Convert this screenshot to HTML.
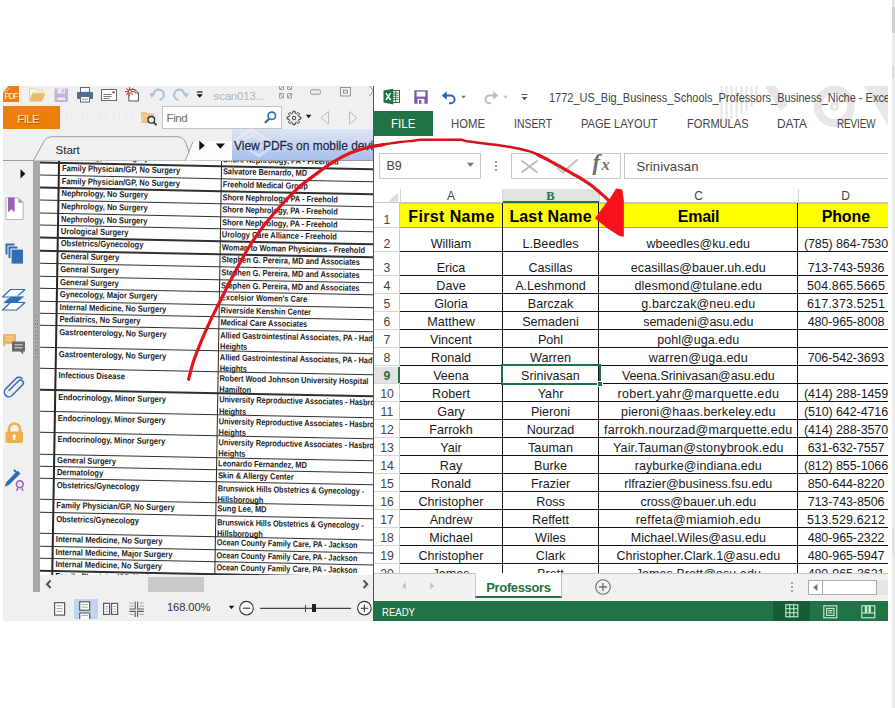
<!DOCTYPE html>
<html lang="en"><head><meta charset="utf-8"><title>PDF to Excel data entry</title>
<style>
html,body{margin:0;padding:0;background:#fff;}
body{width:895px;height:708px;overflow:hidden;position:relative;font-family:"Liberation Sans",sans-serif;}
#stage{position:absolute;left:0;top:0;width:895px;height:708px;overflow:hidden;background:#fff;}
#stage div,#stage span.t,#stage svg{position:absolute;box-sizing:border-box;}
span.t{white-space:pre;display:block;}
</style></head><body><div id="stage">
<div style="left:3px;top:86px;width:370px;height:535px;background:#f0f0f0;"></div>
<div id="doc" style="left:40px;top:160px;width:333px;height:415px;background:#fff;overflow:hidden;">
<div id="scan" style="left:0;top:0;width:345px;height:430px;transform:matrix(1,0.02,-0.0164,1,0,0);transform-origin:20px 4px;">
<div style="left:18.1px;top:-10px;width:1.5px;height:460px;background:#262626;"></div>
<div style="left:180.8px;top:-10px;width:1.5px;height:460px;background:#262626;"></div>
<div style="left:-5px;top:2.2500000000000058px;width:380px;height:1.3px;background:#303030;"></div>
<span class="t" style="left:22.00px;top:-8.26px;font-size:8.7px;line-height:8.7px;color:#1c1c1c;transform:scaleX(0.8700);transform-origin:0 0;font-weight:bold;">Nephrology, No Surgery</span>
<span class="t" style="left:182.80px;top:-8.16px;font-size:8.7px;line-height:8.7px;color:#1c1c1c;transform:scaleX(0.8550);transform-origin:0 0;font-weight:bold;">Shore Nephrology, PA - Freehold</span>
<div style="left:-5px;top:14.750000000000005px;width:380px;height:1.3px;background:#303030;"></div>
<span class="t" style="left:22.00px;top:4.24px;font-size:8.7px;line-height:8.7px;color:#1c1c1c;transform:scaleX(0.8700);transform-origin:0 0;font-weight:bold;">Family Physician/GP, No Surgery</span>
<span class="t" style="left:182.80px;top:4.34px;font-size:8.7px;line-height:8.7px;color:#1c1c1c;transform:scaleX(0.8550);transform-origin:0 0;font-weight:bold;">Salvatore Bernardo, MD</span>
<div style="left:-5px;top:27.449999999999996px;width:380px;height:1.3px;background:#303030;"></div>
<span class="t" style="left:22.00px;top:16.74px;font-size:8.7px;line-height:8.7px;color:#1c1c1c;transform:scaleX(0.8700);transform-origin:0 0;font-weight:bold;">Family Physician/GP, No Surgery</span>
<span class="t" style="left:182.80px;top:16.84px;font-size:8.7px;line-height:8.7px;color:#1c1c1c;transform:scaleX(0.8550);transform-origin:0 0;font-weight:bold;">Freehold Medical Group</span>
<div style="left:-5px;top:39.949999999999996px;width:380px;height:1.3px;background:#303030;"></div>
<span class="t" style="left:22.00px;top:29.44px;font-size:8.7px;line-height:8.7px;color:#1c1c1c;transform:scaleX(0.8700);transform-origin:0 0;font-weight:bold;">Nephrology, No Surgery</span>
<span class="t" style="left:182.80px;top:29.54px;font-size:8.7px;line-height:8.7px;color:#1c1c1c;transform:scaleX(0.8550);transform-origin:0 0;font-weight:bold;">Shore Nephrology, PA - Freehold</span>
<div style="left:-5px;top:52.54999999999999px;width:380px;height:1.3px;background:#303030;"></div>
<span class="t" style="left:22.00px;top:41.94px;font-size:8.7px;line-height:8.7px;color:#1c1c1c;transform:scaleX(0.8700);transform-origin:0 0;font-weight:bold;">Nephrology, No Surgery</span>
<span class="t" style="left:182.80px;top:42.04px;font-size:8.7px;line-height:8.7px;color:#1c1c1c;transform:scaleX(0.8550);transform-origin:0 0;font-weight:bold;">Shore Nephrology, PA - Freehold</span>
<div style="left:-5px;top:65.04999999999998px;width:380px;height:1.3px;background:#303030;"></div>
<span class="t" style="left:22.00px;top:54.54px;font-size:8.7px;line-height:8.7px;color:#1c1c1c;transform:scaleX(0.8700);transform-origin:0 0;font-weight:bold;">Nephrology, No Surgery</span>
<span class="t" style="left:182.80px;top:54.64px;font-size:8.7px;line-height:8.7px;color:#1c1c1c;transform:scaleX(0.8550);transform-origin:0 0;font-weight:bold;">Shore Nephrology, PA - Freehold</span>
<div style="left:-5px;top:77.44999999999999px;width:380px;height:1.3px;background:#303030;"></div>
<span class="t" style="left:22.00px;top:67.04px;font-size:8.7px;line-height:8.7px;color:#1c1c1c;transform:scaleX(0.8700);transform-origin:0 0;font-weight:bold;">Urological Surgery</span>
<span class="t" style="left:182.80px;top:67.14px;font-size:8.7px;line-height:8.7px;color:#1c1c1c;transform:scaleX(0.8550);transform-origin:0 0;font-weight:bold;">Urology Care Alliance - Freehold</span>
<div style="left:-5px;top:90.25px;width:380px;height:1.3px;background:#303030;"></div>
<span class="t" style="left:22.00px;top:79.44px;font-size:8.7px;line-height:8.7px;color:#1c1c1c;transform:scaleX(0.8700);transform-origin:0 0;font-weight:bold;">Obstetrics/Gynecology</span>
<span class="t" style="left:182.80px;top:79.54px;font-size:8.7px;line-height:8.7px;color:#1c1c1c;transform:scaleX(0.8550);transform-origin:0 0;font-weight:bold;">Woman to Woman Physicians - Freehold</span>
<div style="left:-5px;top:102.85px;width:380px;height:1.3px;background:#303030;"></div>
<span class="t" style="left:22.00px;top:92.24px;font-size:8.7px;line-height:8.7px;color:#1c1c1c;transform:scaleX(0.8700);transform-origin:0 0;font-weight:bold;">General Surgery</span>
<span class="t" style="left:182.80px;top:92.34px;font-size:8.7px;line-height:8.7px;color:#1c1c1c;transform:scaleX(0.8550);transform-origin:0 0;font-weight:bold;">Stephen G. Pereira, MD and Associates</span>
<div style="left:-5px;top:115.54999999999998px;width:380px;height:1.3px;background:#303030;"></div>
<span class="t" style="left:22.00px;top:104.84px;font-size:8.7px;line-height:8.7px;color:#1c1c1c;transform:scaleX(0.8700);transform-origin:0 0;font-weight:bold;">General Surgery</span>
<span class="t" style="left:182.80px;top:104.94px;font-size:8.7px;line-height:8.7px;color:#1c1c1c;transform:scaleX(0.8550);transform-origin:0 0;font-weight:bold;">Stephen G. Pereira, MD and Associates</span>
<div style="left:-5px;top:128.04999999999998px;width:380px;height:1.3px;background:#303030;"></div>
<span class="t" style="left:22.00px;top:117.54px;font-size:8.7px;line-height:8.7px;color:#1c1c1c;transform:scaleX(0.8700);transform-origin:0 0;font-weight:bold;">General Surgery</span>
<span class="t" style="left:182.80px;top:117.64px;font-size:8.7px;line-height:8.7px;color:#1c1c1c;transform:scaleX(0.8550);transform-origin:0 0;font-weight:bold;">Stephen G. Pereira, MD and Associates</span>
<div style="left:-5px;top:140.54999999999998px;width:380px;height:1.3px;background:#303030;"></div>
<span class="t" style="left:22.00px;top:130.04px;font-size:8.7px;line-height:8.7px;color:#1c1c1c;transform:scaleX(0.8700);transform-origin:0 0;font-weight:bold;">Gynecology, Major Surgery</span>
<span class="t" style="left:182.80px;top:130.14px;font-size:8.7px;line-height:8.7px;color:#1c1c1c;transform:scaleX(0.8550);transform-origin:0 0;font-weight:bold;">Excelsior Women&#x27;s Care</span>
<div style="left:-5px;top:152.74999999999997px;width:380px;height:1.3px;background:#303030;"></div>
<span class="t" style="left:22.00px;top:142.54px;font-size:8.7px;line-height:8.7px;color:#1c1c1c;transform:scaleX(0.8700);transform-origin:0 0;font-weight:bold;">Internal Medicine, No Surgery</span>
<span class="t" style="left:182.80px;top:142.64px;font-size:8.7px;line-height:8.7px;color:#1c1c1c;transform:scaleX(0.8550);transform-origin:0 0;font-weight:bold;">Riverside Kenshin Center</span>
<div style="left:-5px;top:165.15px;width:380px;height:1.3px;background:#303030;"></div>
<span class="t" style="left:22.00px;top:154.74px;font-size:8.7px;line-height:8.7px;color:#1c1c1c;transform:scaleX(0.8700);transform-origin:0 0;font-weight:bold;">Pediatrics, No Surgery</span>
<span class="t" style="left:182.80px;top:154.84px;font-size:8.7px;line-height:8.7px;color:#1c1c1c;transform:scaleX(0.8550);transform-origin:0 0;font-weight:bold;">Medical Care Associates</span>
<div style="left:-5px;top:186.95000000000002px;width:380px;height:1.3px;background:#303030;"></div>
<span class="t" style="left:22.00px;top:168.24px;font-size:8.7px;line-height:8.7px;color:#1c1c1c;transform:scaleX(0.8700);transform-origin:0 0;font-weight:bold;">Gastroenterology, No Surgery</span>
<span class="t" style="left:182.80px;top:168.14px;font-size:8.7px;line-height:8.7px;color:#1c1c1c;transform:scaleX(0.8464);transform-origin:0 0;font-weight:bold;">Allied Gastrointestinal Associates, PA - Had</span>
<span class="t" style="left:182.80px;top:179.34px;font-size:8.7px;line-height:8.7px;color:#1c1c1c;transform:scaleX(0.8550);transform-origin:0 0;font-weight:bold;">Heights</span>
<div style="left:-5px;top:208.04999999999998px;width:380px;height:1.3px;background:#303030;"></div>
<span class="t" style="left:22.00px;top:190.04px;font-size:8.7px;line-height:8.7px;color:#1c1c1c;transform:scaleX(0.8700);transform-origin:0 0;font-weight:bold;">Gastroenterology, No Surgery</span>
<span class="t" style="left:182.80px;top:189.94px;font-size:8.7px;line-height:8.7px;color:#1c1c1c;transform:scaleX(0.8464);transform-origin:0 0;font-weight:bold;">Allied Gastrointestinal Associates, PA - Had</span>
<span class="t" style="left:182.80px;top:201.14px;font-size:8.7px;line-height:8.7px;color:#1c1c1c;transform:scaleX(0.8550);transform-origin:0 0;font-weight:bold;">Heights</span>
<div style="left:-5px;top:229.45000000000002px;width:380px;height:1.3px;background:#303030;"></div>
<span class="t" style="left:22.00px;top:211.14px;font-size:8.7px;line-height:8.7px;color:#1c1c1c;transform:scaleX(0.8700);transform-origin:0 0;font-weight:bold;">Infectious Disease</span>
<span class="t" style="left:182.80px;top:211.04px;font-size:8.7px;line-height:8.7px;color:#1c1c1c;transform:scaleX(0.8550);transform-origin:0 0;font-weight:bold;">Robert Wood Johnson University Hospital</span>
<span class="t" style="left:182.80px;top:222.24px;font-size:8.7px;line-height:8.7px;color:#1c1c1c;transform:scaleX(0.8550);transform-origin:0 0;font-weight:bold;">Hamilton</span>
<div style="left:-5px;top:250.65px;width:380px;height:1.3px;background:#303030;"></div>
<span class="t" style="left:22.00px;top:232.54px;font-size:8.7px;line-height:8.7px;color:#1c1c1c;transform:scaleX(0.8700);transform-origin:0 0;font-weight:bold;">Endocrinology, Minor Surgery</span>
<span class="t" style="left:182.80px;top:232.44px;font-size:8.7px;line-height:8.7px;color:#1c1c1c;transform:scaleX(0.8379);transform-origin:0 0;font-weight:bold;">University Reproductive Associates - Hasbro</span>
<span class="t" style="left:182.80px;top:243.64px;font-size:8.7px;line-height:8.7px;color:#1c1c1c;transform:scaleX(0.8550);transform-origin:0 0;font-weight:bold;">Heights</span>
<div style="left:-5px;top:272.05px;width:380px;height:1.3px;background:#303030;"></div>
<span class="t" style="left:22.00px;top:253.74px;font-size:8.7px;line-height:8.7px;color:#1c1c1c;transform:scaleX(0.8700);transform-origin:0 0;font-weight:bold;">Endocrinology, Minor Surgery</span>
<span class="t" style="left:182.80px;top:253.64px;font-size:8.7px;line-height:8.7px;color:#1c1c1c;transform:scaleX(0.8379);transform-origin:0 0;font-weight:bold;">University Reproductive Associates - Hasbro</span>
<span class="t" style="left:182.80px;top:264.84px;font-size:8.7px;line-height:8.7px;color:#1c1c1c;transform:scaleX(0.8550);transform-origin:0 0;font-weight:bold;">Heights</span>
<div style="left:-5px;top:293.55px;width:380px;height:1.3px;background:#303030;"></div>
<span class="t" style="left:22.00px;top:275.14px;font-size:8.7px;line-height:8.7px;color:#1c1c1c;transform:scaleX(0.8700);transform-origin:0 0;font-weight:bold;">Endocrinology, Minor Surgery</span>
<span class="t" style="left:182.80px;top:275.04px;font-size:8.7px;line-height:8.7px;color:#1c1c1c;transform:scaleX(0.8379);transform-origin:0 0;font-weight:bold;">University Reproductive Associates - Hasbro</span>
<span class="t" style="left:182.80px;top:286.24px;font-size:8.7px;line-height:8.7px;color:#1c1c1c;transform:scaleX(0.8550);transform-origin:0 0;font-weight:bold;">Heights</span>
<div style="left:-5px;top:305.85px;width:380px;height:1.3px;background:#303030;"></div>
<span class="t" style="left:22.00px;top:295.54px;font-size:8.7px;line-height:8.7px;color:#1c1c1c;transform:scaleX(0.8700);transform-origin:0 0;font-weight:bold;">General Surgery</span>
<span class="t" style="left:182.80px;top:295.64px;font-size:8.7px;line-height:8.7px;color:#1c1c1c;transform:scaleX(0.8550);transform-origin:0 0;font-weight:bold;">Leonardo Fernandez, MD</span>
<div style="left:-5px;top:318.05px;width:380px;height:1.3px;background:#303030;"></div>
<span class="t" style="left:22.00px;top:307.84px;font-size:8.7px;line-height:8.7px;color:#1c1c1c;transform:scaleX(0.8700);transform-origin:0 0;font-weight:bold;">Dermatology</span>
<span class="t" style="left:182.80px;top:307.94px;font-size:8.7px;line-height:8.7px;color:#1c1c1c;transform:scaleX(0.8550);transform-origin:0 0;font-weight:bold;">Skin &amp; Allergy Center</span>
<div style="left:-5px;top:339.15000000000003px;width:380px;height:1.3px;background:#303030;"></div>
<span class="t" style="left:22.00px;top:321.14px;font-size:8.7px;line-height:8.7px;color:#1c1c1c;transform:scaleX(0.8700);transform-origin:0 0;font-weight:bold;">Obstetrics/Gynecology</span>
<span class="t" style="left:182.80px;top:321.04px;font-size:8.7px;line-height:8.7px;color:#1c1c1c;transform:scaleX(0.8311);transform-origin:0 0;font-weight:bold;">Brunswick Hills Obstetrics &amp; Gynecology -</span>
<span class="t" style="left:182.80px;top:332.24px;font-size:8.7px;line-height:8.7px;color:#1c1c1c;transform:scaleX(0.8550);transform-origin:0 0;font-weight:bold;">Hillsborough</span>
<div style="left:-5px;top:351.85px;width:380px;height:1.3px;background:#303030;"></div>
<span class="t" style="left:22.00px;top:341.14px;font-size:8.7px;line-height:8.7px;color:#1c1c1c;transform:scaleX(0.8700);transform-origin:0 0;font-weight:bold;">Family Physician/GP, No Surgery</span>
<span class="t" style="left:182.80px;top:341.24px;font-size:8.7px;line-height:8.7px;color:#1c1c1c;transform:scaleX(0.8550);transform-origin:0 0;font-weight:bold;">Sung Lee, MD</span>
<div style="left:-5px;top:373.05000000000007px;width:380px;height:1.3px;background:#303030;"></div>
<span class="t" style="left:22.00px;top:354.94px;font-size:8.7px;line-height:8.7px;color:#1c1c1c;transform:scaleX(0.8700);transform-origin:0 0;font-weight:bold;">Obstetrics/Gynecology</span>
<span class="t" style="left:182.80px;top:354.84px;font-size:8.7px;line-height:8.7px;color:#1c1c1c;transform:scaleX(0.8311);transform-origin:0 0;font-weight:bold;">Brunswick Hills Obstetrics &amp; Gynecology -</span>
<span class="t" style="left:182.80px;top:366.04px;font-size:8.7px;line-height:8.7px;color:#1c1c1c;transform:scaleX(0.8550);transform-origin:0 0;font-weight:bold;">Hillsborough</span>
<div style="left:-5px;top:385.55000000000007px;width:380px;height:1.3px;background:#303030;"></div>
<span class="t" style="left:22.00px;top:375.04px;font-size:8.7px;line-height:8.7px;color:#1c1c1c;transform:scaleX(0.8700);transform-origin:0 0;font-weight:bold;">Internal Medicine, No Surgery</span>
<span class="t" style="left:182.80px;top:375.14px;font-size:8.7px;line-height:8.7px;color:#1c1c1c;transform:scaleX(0.8328);transform-origin:0 0;font-weight:bold;">Ocean County Family Care, PA - Jackson</span>
<div style="left:-5px;top:397.95000000000005px;width:380px;height:1.3px;background:#303030;"></div>
<span class="t" style="left:22.00px;top:387.54px;font-size:8.7px;line-height:8.7px;color:#1c1c1c;transform:scaleX(0.8700);transform-origin:0 0;font-weight:bold;">Internal Medicine, Major Surgery</span>
<span class="t" style="left:182.80px;top:387.64px;font-size:8.7px;line-height:8.7px;color:#1c1c1c;transform:scaleX(0.8328);transform-origin:0 0;font-weight:bold;">Ocean County Family Care, PA - Jackson</span>
<div style="left:-5px;top:410.35px;width:380px;height:1.3px;background:#303030;"></div>
<span class="t" style="left:22.00px;top:399.94px;font-size:8.7px;line-height:8.7px;color:#1c1c1c;transform:scaleX(0.8700);transform-origin:0 0;font-weight:bold;">Internal Medicine, No Surgery</span>
<span class="t" style="left:182.80px;top:400.04px;font-size:8.7px;line-height:8.7px;color:#1c1c1c;transform:scaleX(0.8328);transform-origin:0 0;font-weight:bold;">Ocean County Family Care, PA - Jackson</span>
<div style="left:-5px;top:422.75px;width:380px;height:1.3px;background:#303030;"></div>
<span class="t" style="left:22.00px;top:412.34px;font-size:8.7px;line-height:8.7px;color:#1c1c1c;transform:scaleX(0.8700);transform-origin:0 0;font-weight:bold;">Family Physician/GP, No Surgery</span>
<span class="t" style="left:182.80px;top:412.44px;font-size:8.7px;line-height:8.7px;color:#1c1c1c;transform:scaleX(0.8328);transform-origin:0 0;font-weight:bold;">Ocean County Family Care, PA - Jackson</span>
</div></div>
<div style="left:33px;top:160px;width:7px;height:432px;background:#a9a9a9;"></div>
<div style="left:34.5px;top:316.0px;width:1.3px;height:1.3px;background:#878787;"></div>
<div style="left:37px;top:316.0px;width:1.3px;height:1.3px;background:#878787;"></div>
<div style="left:34.5px;top:319.7px;width:1.3px;height:1.3px;background:#878787;"></div>
<div style="left:37px;top:319.7px;width:1.3px;height:1.3px;background:#878787;"></div>
<div style="left:34.5px;top:323.4px;width:1.3px;height:1.3px;background:#878787;"></div>
<div style="left:37px;top:323.4px;width:1.3px;height:1.3px;background:#878787;"></div>
<div style="left:34.5px;top:327.1px;width:1.3px;height:1.3px;background:#878787;"></div>
<div style="left:37px;top:327.1px;width:1.3px;height:1.3px;background:#878787;"></div>
<div style="left:34.5px;top:330.8px;width:1.3px;height:1.3px;background:#878787;"></div>
<div style="left:37px;top:330.8px;width:1.3px;height:1.3px;background:#878787;"></div>
<div style="left:34.5px;top:334.5px;width:1.3px;height:1.3px;background:#878787;"></div>
<div style="left:37px;top:334.5px;width:1.3px;height:1.3px;background:#878787;"></div>
<div style="left:34.5px;top:338.2px;width:1.3px;height:1.3px;background:#878787;"></div>
<div style="left:37px;top:338.2px;width:1.3px;height:1.3px;background:#878787;"></div>
<div style="left:34.5px;top:341.9px;width:1.3px;height:1.3px;background:#878787;"></div>
<div style="left:37px;top:341.9px;width:1.3px;height:1.3px;background:#878787;"></div>
<div style="left:34.5px;top:345.6px;width:1.3px;height:1.3px;background:#878787;"></div>
<div style="left:37px;top:345.6px;width:1.3px;height:1.3px;background:#878787;"></div>
<div style="left:34.5px;top:349.3px;width:1.3px;height:1.3px;background:#878787;"></div>
<div style="left:37px;top:349.3px;width:1.3px;height:1.3px;background:#878787;"></div>
<div style="left:34.5px;top:353.0px;width:1.3px;height:1.3px;background:#878787;"></div>
<div style="left:37px;top:353.0px;width:1.3px;height:1.3px;background:#878787;"></div>
<div style="left:34.5px;top:356.7px;width:1.3px;height:1.3px;background:#878787;"></div>
<div style="left:37px;top:356.7px;width:1.3px;height:1.3px;background:#878787;"></div>
<div style="left:3px;top:160px;width:370px;height:1px;background:#9a9a9a;"></div>
<div style="left:40px;top:575px;width:333px;height:16.5px;background:#f0f0f0;"></div>
<div style="left:147.5px;top:577px;width:56px;height:14.5px;background:#c9c9c9;"></div>
<svg style="left:44px;top:578px" width="10" height="12" viewBox="0 0 10 12"><path d="M6.600 2.400L3 6.200L6.600 10" fill="none" stroke="#505050" stroke-width="2"/></svg>
<svg style="left:361px;top:578px" width="10" height="12" viewBox="0 0 10 12"><path d="M2.600 2.400L6.200 6.200L2.600 10" fill="none" stroke="#505050" stroke-width="2"/></svg>
<div style="left:74px;top:599px;width:24px;height:20px;background:#c4d4ef;"></div>
<svg style="left:50px;top:598px" width="100" height="22" viewBox="0 0 100 22" fill="none" stroke="#5a5a5a" stroke-width="1.200">
<rect x="4.600" y="4.700" width="10" height="12.400" fill="#fff"/><path d="M6.500 7.800h6.200M6.500 10.600h6.200M6.500 13.400h6.200" stroke="#9a9a9a" stroke-width="0.900"/>
<rect x="29.700" y="3.800" width="10" height="8.400" fill="#fff"/><path d="M29.700 21v-6h10v6" fill="#fff"/><path d="M31.500 6.600h6.400M31.500 9.200h6.400M31.500 17.400h6.400" stroke="#9a9a9a" stroke-width="0.900"/>
<rect x="53.600" y="5.400" width="6" height="11" fill="#fff"/><rect x="61.600" y="5.400" width="6" height="11" fill="#fff"/><path d="M55.300 8.500h2.800M55.300 11h2.800M55.300 13.500h2.800M63.300 8.500h2.800M63.300 11h2.800M63.300 13.500h2.800" stroke="#9a9a9a" stroke-width="0.900"/>
<path d="M85.200 3.400v7.600h-5.800M87.600 3.400v7.600h6.200M85.200 19v-5.600h-5.800M87.600 19v-5.600h6.200" stroke="#5a5a5a" stroke-width="1.100"/><path d="M79.500 5h4M79.500 8h4M89.500 5h4.400M89.500 8h4.400M79.500 16.400h4M89.500 16.400h4.400" stroke="#9a9a9a" stroke-width="0.900"/>
</svg>
<span class="t" style="left:167.00px;top:602.42px;font-size:11.2px;line-height:11.2px;color:#333;letter-spacing:-0.102px;">168.00%</span>
<svg style="left:228px;top:605px" width="8" height="6" viewBox="0 0 8 6"><path d="M0.8 0.8h5.4L3.500 4.200z" fill="#111"/></svg>
<svg style="left:236px;top:598px" width="140" height="22" viewBox="0 0 140 22" fill="none" stroke="#333" stroke-width="1.100">
<circle cx="10.5" cy="10.2" r="6.8" fill="#fff"/><path d="M6.800 10.200h7.400"/>
<path d="M24 10.400h91" stroke="#444"/><path d="M69.500 7v7" stroke="#444"/><rect x="76" y="6" width="4" height="8" fill="#222" stroke="none"/>
<circle cx="128.400" cy="10.200" r="6.800" fill="#fff"/><path d="M124.600 10.200h7.600M128.400 6.400v7.600"/>
</svg>
<svg style="left:19px;top:168.300px" width="8" height="12" viewBox="0 0 8 12"><path d="M1.500 1.200v9.200L6.400 5.800z" fill="#111"/></svg>
<svg style="left:4px;top:196px" width="24" height="28" viewBox="0 0 24 28"><path d="M2 2h12.500l4.700 4.700v16.800h-17.200z" fill="#fff" stroke="#b5b5b5"/><path d="M14.500 2l4.700 4.700h-4.700z" fill="#9a9a9a"/><path d="M4 1.600v14.600l3.300-2.900 3.300 2.900V1.600z" fill="#9b5fb5"/></svg>
<svg style="left:3px;top:241px" width="24" height="26" viewBox="0 0 24 26"><path d="M2.500 2.500h9v2h-7v9h-2z" fill="#2f6db5"/><path d="M5.500 5.500h9v2h-7v9.500h-2z" fill="#2f6db5"/><rect x="8.600" y="8.600" width="11.400" height="14" fill="#2f6db5"/></svg>
<svg style="left:1px;top:287px" width="27" height="26" viewBox="0 0 27 26" fill="none" stroke-linejoin="round"><path d="M9.500 2.500h14.500l-8.500 7.500h-14z" stroke="#2f6db5" stroke-width="1.200" fill="#fff"/><path d="M9.500 9h14.500l-8.500 7.500h-14z" fill="#2f6db5" stroke="#f0f0f0" stroke-width="0.800"/><path d="M9.500 15.500h14.500l-8.500 7.500h-14z" stroke="#2f6db5" stroke-width="1.200" fill="#fff"/></svg>
<svg style="left:2px;top:331px" width="26" height="26" viewBox="0 0 26 26"><path d="M1 3h13v10h-9.500l-3.500 3z" fill="#f0b45c"/><path d="M3.500 6h8M3.500 9h8" stroke="#fbe3bd"/><path d="M10 10.500h13v10h-1.800v3l-3-3h-8.200z" fill="#6a6a6a"/><path d="M12.500 13.800h8M12.500 16.800h8" stroke="#ddd"/></svg>
<svg style="left:2px;top:375px" width="26" height="26" viewBox="0 0 26 26" fill="none" stroke="#2f6db5" stroke-width="1.500" stroke-linecap="round"><path d="M7 15.500l9.500-9.500a2.700 2.700 0 0 1 4 4l-10.500 10.500a4.600 4.600 0 0 1-6.500-6.500l10.500-10.500a4.200 4.200 0 0 1 6 0"/></svg>
<svg style="left:4px;top:421px" width="22" height="24" viewBox="0 0 22 24"><path d="M5 11V8a5.500 5.500 0 0 1 11 0v3" fill="none" stroke="#eeb04e" stroke-width="2.600"/><rect x="1.500" y="10.500" width="17.500" height="11.500" rx="1.500" fill="#eeb04e"/><path d="M10.200 13.500a1.600 1.600 0 0 1 .9 3v2.500h-1.800v-2.500a1.600 1.600 0 0 1 .9-3z" fill="#fff"/></svg>
<svg style="left:3px;top:467px" width="24" height="26" viewBox="0 0 24 26"><path d="M14.500 3.500l3 3-11.500 11.500-4.500 1.800 1.800-4.600z" fill="#2f6db5"/><path d="M11 3l2 2" stroke="#2f6db5" stroke-width="2"/><circle cx="16.800" cy="17.200" r="3.400" fill="#f2e7f7" stroke="#9b5fb5" stroke-width="1.600"/><path d="M14.300 20l-1.500 4.200 2.600-1.400zM19.300 20l1.500 4.200-2.600-1.400z" fill="#9b5fb5"/></svg>
<svg style="left:3px;top:86px" width="17" height="17" viewBox="0 0 17 17"><rect x="0" y="0" width="16" height="16" fill="#ee7d12"/><path d="M0 6.500L5.500 0H0z" fill="#f0f0f0"/><path d="M0.500 7l2-2.200 1 .6 3-3.600" stroke="#fbd7a6" stroke-width="0.900" fill="none"/></svg>
<span class="t" style="left:4.50px;top:92.96px;font-size:8.2px;line-height:8.2px;color:#fff2dc;letter-spacing:-1.133px;">PDF</span>
<svg style="left:28px;top:87px" width="20" height="16" viewBox="0 0 20 16"><path d="M1.500 1.500h5l1.500 1.500h6.500v3h-10l-3 8z" fill="#fdf6e3" stroke="#e3c48c" stroke-width="0.800"/><path d="M4.800 6.500h12.700l-3.600 8h-12.200z" fill="#eab866"/></svg>
<svg style="left:54px;top:88px" width="15" height="15" viewBox="0 0 15 15"><rect x="0.500" y="0.500" width="13.500" height="13.500" fill="#c5b1d9"/><rect x="3.500" y="0.500" width="7.500" height="5" fill="#efe8f5"/><rect x="7.800" y="1.300" width="1.800" height="3" fill="#c5b1d9"/><rect x="3.500" y="9.500" width="7.500" height="2.500" fill="#efe8f5"/></svg>
<svg style="left:76px;top:86px" width="18" height="18" viewBox="0 0 18 18"><rect x="4.500" y="1.500" width="9" height="6" fill="#fff" stroke="#5c6b7d"/><rect x="1" y="6" width="16" height="7" rx="1" fill="#5c6b7d"/><rect x="5" y="5.800" width="8" height="2" fill="#3f74b5"/><rect x="4.500" y="10.500" width="9" height="5.500" fill="#fff" stroke="#5c6b7d"/><path d="M6 13.200h6" stroke="#8a96a5"/></svg>
<svg style="left:100px;top:88px" width="18" height="14" viewBox="0 0 18 14"><rect x="1.500" y="1.500" width="15" height="11" fill="#fff" stroke="#666"/><path d="M3.500 6.500h8M3.500 8.500h8M3.500 10.500h6" stroke="#666" stroke-width="0.900"/><rect x="12.500" y="3.300" width="2" height="2" fill="#444"/></svg>
<svg style="left:124px;top:86px" width="18" height="18" viewBox="0 0 18 18"><path d="M4.800 3.500h6.200l3.500 3.500v8h-9.700z" fill="#fff" stroke="#555" stroke-width="1"/><path d="M11 3.500v3.500h3.500" fill="none" stroke="#555" stroke-width="0.900"/><path d="M6.80 5.60L10.20 5.60M6.45 6.45L8.85 8.85M5.60 6.80L5.60 10.20M4.75 6.45L2.35 8.85M4.40 5.60L1.00 5.60M4.75 4.75L2.35 2.35M5.60 4.40L5.60 1.00M6.45 4.75L8.85 2.35" stroke="#dc4a35" stroke-width="1.100"/></svg>
<svg style="left:148px;top:86px" width="18" height="18" viewBox="0 0 18 18" fill="none"><path d="M5.52 8.35A5.2 5.2 0 1 1 11.60 13.92" stroke="#a9c0dd" stroke-width="2.100"/><path d="M1.300 7.200l6.200 0.300-3.800 4.300z" fill="#a9c0dd"/></svg>
<svg style="left:172px;top:86px" width="18" height="18" viewBox="0 0 18 18" fill="none"><path d="M12.48 8.35A5.2 5.2 0 1 0 6.40 13.92" stroke="#a9c0dd" stroke-width="2.100"/><path d="M17 7.200l-6.200 0.300 3.800 4.300z" fill="#a9c0dd"/></svg>
<svg style="left:195px;top:90px" width="9" height="9" viewBox="0 0 9 9"><path d="M1.800 2h5.800" stroke="#111" stroke-width="1.200"/><path d="M1.600 4.200h6.200L4.700 7.800z" fill="#111"/></svg>
<span class="t" style="left:213.60px;top:91.27px;font-size:11.5px;line-height:11.5px;color:#b3b3b3;letter-spacing:-0.206px;">scan013...</span>
<svg style="left:277px;top:86px" width="96" height="18" viewBox="0 0 96 18" fill="none" stroke="#8a8a8a" stroke-width="0.900"><path d="M2.500 -1h4v4.500h-4zM10.500 -1h4v4.500h-4zM2.500 7.500h4v4.500h-4zM10.500 7.500h4v4.500h-4zM3 3l3-3M14 3l-3-3M3 8l3 3.500M14 8l-3 3.500" stroke-width="0.800"/><rect x="33.500" y="3.800" width="10" height="4.400" rx="1.500"/><rect x="63.500" y="1.500" width="10" height="8.500"/><rect x="66.500" y="4.200" width="4" height="2.800"/><path d="M92.500 0l4 5M92.500 10l4-5"/></svg>
<div style="left:3px;top:106px;width:57px;height:23px;background:#ef7f0b;"></div>
<span class="t" style="left:17.30px;top:113.83px;font-size:11.3px;line-height:11.3px;color:#ffe9bd;letter-spacing:-0.516px;text-shadow:0.5px 0.8px 0 #a65a0a;">FILE</span>
<div style="left:66px;top:112px;width:1px;height:11px;background:#ece9e2;"></div>
<div style="left:71px;top:113px;width:1px;height:9px;background:#f3e9cf;"></div>
<div style="left:77px;top:114px;width:1px;height:7px;background:#ece9e2;"></div>
<div style="left:82px;top:112px;width:1px;height:11px;background:#f3e9cf;"></div>
<div style="left:87px;top:113px;width:1px;height:9px;background:#ece9e2;"></div>
<div style="left:93px;top:114px;width:1px;height:7px;background:#f3e9cf;"></div>
<div style="left:99px;top:112px;width:1px;height:11px;background:#ece9e2;"></div>
<div style="left:105px;top:113px;width:1px;height:9px;background:#f3e9cf;"></div>
<div style="left:113px;top:114px;width:1px;height:7px;background:#ece9e2;"></div>
<div style="left:119px;top:112px;width:1px;height:11px;background:#f3e9cf;"></div>
<div style="left:126px;top:113px;width:1px;height:9px;background:#ece9e2;"></div>
<div style="left:131px;top:114px;width:1px;height:7px;background:#f3e9cf;"></div>
<svg style="left:140px;top:110px" width="18" height="17" viewBox="0 0 18 17"><path d="M1 2h5l1.300 1.500h6.200v9.500h-12.500z" fill="#edc27a"/><path d="M1 13l2.500-7h4" fill="none" stroke="#f7e3bd" stroke-width="1"/><circle cx="11.300" cy="9.800" r="3.300" fill="#f4f4f4" stroke="#333" stroke-width="1.400"/><path d="M13.700 12.300l2.800 2.800" stroke="#333" stroke-width="1.800"/></svg>
<div style="left:162px;top:106px;width:120px;height:23px;background:#fff;border:1px solid #c3c3c3;"></div>
<span class="t" style="left:166.60px;top:112.18px;font-size:11.6px;line-height:11.6px;color:#6e6e6e;letter-spacing:-0.516px;">Find</span>
<svg style="left:263px;top:110px" width="15" height="15" viewBox="0 0 15 15" fill="none"><circle cx="8.800" cy="5.800" r="3.700" stroke="#2f6db5" stroke-width="1.700"/><path d="M6.200 8.600l-4.200 4.400" stroke="#2f6db5" stroke-width="2.200"/></svg>
<svg style="left:286px;top:110px" width="16" height="16" viewBox="0 0 16 16" fill="none" stroke="#2e2e2e" stroke-linejoin="round"><path d="M6.92 1.18L9.08 1.18L9.19 3.04L10.66 3.65L12.06 2.42L13.58 3.94L12.35 5.34L12.96 6.81L14.82 6.92L14.82 9.08L12.96 9.19L12.35 10.66L13.58 12.06L12.06 13.58L10.66 12.35L9.19 12.96L9.08 14.82L6.92 14.82L6.81 12.96L5.34 12.35L3.94 13.58L2.42 12.06L3.65 10.66L3.04 9.19L1.18 9.08L1.18 6.92L3.04 6.81L3.65 5.34L2.42 3.94L3.94 2.42L5.34 3.65L6.81 3.04z" stroke-width="0.950"/><circle cx="8" cy="8" r="1.700" stroke-width="0.900"/></svg>
<svg style="left:305px;top:114px" width="8" height="6" viewBox="0 0 8 6"><path d="M0.800 0.800h5.600L3.600 4.300z" fill="#111"/></svg>
<svg style="left:319px;top:110px" width="42" height="16" viewBox="0 0 42 16" fill="none" stroke="#b5b5b5" stroke-width="0.900"><path d="M9.500 1.500v12.500L2 7.800z"/><path d="M30.500 1.500v12.500L38 7.800z"/></svg>
<svg style="left:3px;top:130px" width="230" height="31" viewBox="0 0 230 31" fill="none"><path d="M30.500 30.500L41.500 10.500Q44 6.700 48.500 6.700H174Q180 6.700 182.500 12L186 22Q187.500 27 190 30.500" fill="#f1f1f1" stroke="#9a9a9a" stroke-width="1"/><path d="M190.200 11.500L182.500 30.500" stroke="#9a9a9a" stroke-width="1"/><path d="M190.800 11.200L183 30.500H232V11.200z" fill="#fff" stroke="none" opacity="0.850"/></svg>
<span class="t" style="left:55.50px;top:144.08px;font-size:11.6px;line-height:11.6px;color:#222;letter-spacing:-0.039px;">Start</span>
<svg style="left:198px;top:140px" width="8" height="11" viewBox="0 0 8 11"><path d="M1.300 0.800v9.400L6.800 5.500z" fill="#111"/></svg>
<svg style="left:215px;top:143px" width="11" height="7" viewBox="0 0 11 7"><path d="M0.800 0.600h9.200L5.400 5.800z" fill="#111"/></svg>
<div style="left:231.5px;top:128.6px;width:141.5px;height:31.4px;background:linear-gradient(180deg,#dfe3f3 0%,#cfd9f0 35%,#b4c8ec 75%,#a8c0ea 100%);overflow:hidden;"></div>
<svg style="left:231px;top:128px" width="60" height="32" viewBox="0 0 60 32" fill="none" opacity="0.550"><path d="M4 12L20 2l24 14-16 12z" stroke="#eef1fa" stroke-width="3"/><path d="M12 12l9-5 14 8-9 6z" stroke="#eef1fa" stroke-width="1.500"/></svg>
<span class="t" style="left:234.30px;top:140.30px;font-size:12.4px;line-height:12.4px;color:#1d2b4d;transform:scaleX(0.9630);transform-origin:0 0;text-shadow:0 0 2px #eef3ff,0 0 1px #fff;-webkit-text-stroke:0.350px #1d2b4d;">View PDFs on mobile devi</span>
<div style="left:373px;top:86px;width:515px;height:535px;background:#fff;"></div>
<div style="left:373px;top:86px;width:1px;height:535px;background:#3d5f4c;"></div>
<svg style="left:720px;top:86px" width="168" height="56" viewBox="0 0 168 56" fill="none"><g stroke="#e7e7e7"><path d="M1.500 0v36M6.500 0v35M11.500 0v33M16.500 0v31M21.500 0v28M26.500 0v25M31.500 0v21M36.500 0v17" stroke-width="2.200"/><path d="M49 -2L64 22" stroke-width="9"/><circle cx="114.400" cy="20.400" r="16.500" stroke-width="8"/><circle cx="114.400" cy="20.400" r="3" stroke-width="3.500"/></g><path d="M144 0L168 40V0z" fill="#e7e7e7"/></svg>
<svg style="left:383px;top:88px" width="18" height="18" viewBox="0 0 18 18"><rect x="8.500" y="2.500" width="8" height="12" fill="#fff" stroke="#217346"/><path d="M10 5h5.500M10 7.200h5.500M10 9.400h5.500M10 11.600h5.500M12.700 3v11" stroke="#217346" stroke-width="0.900"/><path d="M0.500 2.600L10.300 0.800v15.600L0.500 14.600z" fill="#217346"/><path d="M3 5.200l4.600 6.800M7.600 5.200L3 12" stroke="#fff" stroke-width="1.500"/></svg>
<svg style="left:414px;top:90px" width="14" height="14" viewBox="0 0 14 14"><rect x="0.300" y="0.300" width="13.400" height="13.400" fill="#7b5ba6"/><rect x="2.600" y="1.600" width="8.800" height="5" fill="#fff"/><rect x="3.600" y="8.800" width="6.800" height="4.900" fill="#fff"/><rect x="5" y="10" width="2.300" height="3.700" fill="#7b5ba6"/></svg>
<svg style="left:441px;top:89px" width="40" height="16" viewBox="0 0 40 16" fill="none"><path d="M3.500 6.500h6.200a3.900 3.900 0 0 1 0 7.800h-1.700" stroke="#2f62b0" stroke-width="1.900"/><path d="M0.800 6.500l5-4.300v8.600z" fill="#2f62b0"/><path d="M20 6.800h5L22.500 9.600z" fill="#777"/></svg>
<svg style="left:481px;top:89px" width="40" height="16" viewBox="0 0 40 16" fill="none"><path d="M14.500 6.500h-6.200a3.900 3.900 0 0 0 0 7.800h1.700" stroke="#bdbdbd" stroke-width="1.900"/><path d="M17.200 6.500l-5-4.300v8.600z" fill="#bdbdbd"/><path d="M22 6.800h5L24.500 9.600z" fill="#c4c4c4"/></svg>
<svg style="left:520px;top:93px" width="9" height="9" viewBox="0 0 9 9"><path d="M1.500 1.500h6" stroke="#555" stroke-width="1"/><path d="M1.500 4h6L4.500 7.300z" fill="#555"/></svg>
<span class="t" style="left:549.00px;top:91.90px;font-size:12.4px;line-height:12.4px;color:#444;transform:scaleX(0.8856);transform-origin:0 0;">1772_US_Big_Business_Schools_Professors_Business_Niche - Excel</span>
<div style="left:374px;top:111px;width:59px;height:25px;background:#217346;"></div>
<span class="t" style="left:391.25px;top:117.70px;font-size:12.4px;line-height:12.4px;color:#fff;transform:scaleX(0.9356);transform-origin:0 0;">FILE</span>
<span class="t" style="left:450.50px;top:117.70px;font-size:12.4px;line-height:12.4px;color:#444;transform:scaleX(0.9140);transform-origin:0 0;">HOME</span>
<span class="t" style="left:513.70px;top:117.70px;font-size:12.4px;line-height:12.4px;color:#444;transform:scaleX(0.8420);transform-origin:0 0;">INSERT</span>
<span class="t" style="left:581.00px;top:117.70px;font-size:12.4px;line-height:12.4px;color:#444;transform:scaleX(0.8929);transform-origin:0 0;">PAGE LAYOUT</span>
<span class="t" style="left:686.70px;top:117.70px;font-size:12.4px;line-height:12.4px;color:#444;transform:scaleX(0.8941);transform-origin:0 0;">FORMULAS</span>
<span class="t" style="left:777.00px;top:117.70px;font-size:12.4px;line-height:12.4px;color:#444;transform:scaleX(0.9606);transform-origin:0 0;">DATA</span>
<span class="t" style="left:837.40px;top:117.70px;font-size:12.4px;line-height:12.4px;color:#444;transform:scaleX(0.7891);transform-origin:0 0;">REVIEW</span>
<div style="left:379px;top:153px;width:102px;height:26px;background:#fff;border:1px solid #c8c8c8;"></div>
<span class="t" style="left:386.40px;top:160.22px;font-size:12.5px;line-height:12.5px;color:#444;">B9</span>
<svg style="left:466px;top:162px" width="9" height="6" viewBox="0 0 9 6"><path d="M0.800 0.800h7.200L4.400 4.800z" fill="#777"/></svg>
<div style="left:495.3px;top:161.4px;width:1.8px;height:1.8px;background:#9a9a9a;"></div>
<div style="left:495.3px;top:165.2px;width:1.8px;height:1.8px;background:#9a9a9a;"></div>
<div style="left:495.3px;top:169px;width:1.8px;height:1.8px;background:#9a9a9a;"></div>
<div style="left:511px;top:153px;width:110px;height:26px;background:#fff;border:1px solid #c8c8c8;"></div>
<svg style="left:519px;top:158px" width="64" height="17" viewBox="0 0 64 17" fill="none"><path d="M2.500 2.500l16 12M18.500 2.500l-16 12" stroke="#b9b9b9" stroke-width="1.700"/><path d="M38 9.500l6 5L58.500 1.500" stroke="#c6c6c6" stroke-width="2.200"/></svg>
<span class="t" style="left:592.60px;top:152.15px;font-size:22.5px;line-height:22.5px;color:#6f6f6f;font-weight:bold;font-style:italic;font-family:'Liberation Serif',serif;">f</span>
<span class="t" style="left:601.60px;top:157.23px;font-size:16.5px;line-height:16.5px;color:#6f6f6f;font-weight:bold;font-style:italic;font-family:'Liberation Serif',serif;">x</span>
<div style="left:624px;top:153px;width:264px;height:26px;background:#fff;border:1px solid #c8c8c8;border-right:none;"></div>
<span class="t" style="left:636.50px;top:160.00px;font-size:13px;line-height:13px;color:#444;letter-spacing:0.130px;">Srinivasan</span>
<div id="grid" style="left:374px;top:188px;width:514px;height:385.5px;overflow:hidden;background:#fff;">
<div style="left:0px;top:0px;width:514px;height:15px;background:#fff;border-bottom:1px solid #c9c9c9;"></div>
<div style="left:128px;top:1px;width:97px;height:14px;background:#e2e2e2;border-bottom:2px solid #217346;"></div>
<div style="left:26px;top:1px;width:1px;height:14px;background:#d6d6d6;"></div>
<div style="left:128px;top:1px;width:1px;height:14px;background:#d6d6d6;"></div>
<div style="left:225px;top:1px;width:1px;height:14px;background:#d6d6d6;"></div>
<div style="left:424px;top:1px;width:1px;height:14px;background:#d6d6d6;"></div>
<svg style="left:14px;top:4px" width="11" height="10" viewBox="0 0 11 10"><path d="M10 0.500v9h-9.500z" fill="#dcdcdc"/></svg>
<span class="t" style="left:73.00px;top:2.04px;font-size:12px;line-height:12px;color:#444;">A</span>
<span class="t" style="left:320.17px;top:2.04px;font-size:12px;line-height:12px;color:#444;">C</span>
<span class="t" style="left:467.27px;top:2.04px;font-size:12px;line-height:12px;color:#444;">D</span>
<span class="t" style="left:172.33px;top:1.62px;font-size:12.5px;line-height:12.5px;color:#217346;font-weight:bold;font-family:'Liberation Serif',serif;">B</span>
<div style="left:0px;top:15px;width:26px;height:380px;background:#fff;border-right:1px solid #c9c9c9;"></div>
<div style="left:26px;top:15.199999999999989px;width:500px;height:24.3px;background:#ffff00;border-top:1px solid #d4d43a;"></div>
<div style="left:0px;top:178.5px;width:26px;height:17.5px;background:#e2e2e2;border-right:2px solid #217346;"></div>
<div style="left:0px;top:39.0px;width:26px;height:1px;background:#d6d6d6;"></div>
<div style="left:26px;top:38.9px;width:500px;height:1px;background:#a8a838;"></div>
<div style="left:0px;top:63.0px;width:26px;height:1px;background:#d6d6d6;"></div>
<div style="left:26px;top:62.75px;width:500px;height:1.25px;background:#111;"></div>
<div style="left:0px;top:87.0px;width:26px;height:1px;background:#d6d6d6;"></div>
<div style="left:26px;top:86.75px;width:500px;height:1.25px;background:#111;"></div>
<div style="left:0px;top:105.0px;width:26px;height:1px;background:#d6d6d6;"></div>
<div style="left:26px;top:104.75px;width:500px;height:1.25px;background:#111;"></div>
<div style="left:0px;top:123.0px;width:26px;height:1px;background:#d6d6d6;"></div>
<div style="left:26px;top:122.75px;width:500px;height:1.25px;background:#111;"></div>
<div style="left:0px;top:141.0px;width:26px;height:1px;background:#d6d6d6;"></div>
<div style="left:26px;top:140.75px;width:500px;height:1.25px;background:#111;"></div>
<div style="left:0px;top:159.0px;width:26px;height:1px;background:#d6d6d6;"></div>
<div style="left:26px;top:158.75px;width:500px;height:1.25px;background:#111;"></div>
<div style="left:0px;top:177.0px;width:26px;height:1px;background:#d6d6d6;"></div>
<div style="left:26px;top:176.75px;width:500px;height:1.25px;background:#111;"></div>
<div style="left:0px;top:195.0px;width:26px;height:1px;background:#d6d6d6;"></div>
<div style="left:26px;top:194.75px;width:500px;height:1.25px;background:#111;"></div>
<div style="left:0px;top:213.0px;width:26px;height:1px;background:#d6d6d6;"></div>
<div style="left:26px;top:212.75px;width:500px;height:1.25px;background:#111;"></div>
<div style="left:0px;top:231.0px;width:26px;height:1px;background:#d6d6d6;"></div>
<div style="left:26px;top:230.75px;width:500px;height:1.25px;background:#111;"></div>
<div style="left:0px;top:249.0px;width:26px;height:1px;background:#d6d6d6;"></div>
<div style="left:26px;top:248.75px;width:500px;height:1.25px;background:#111;"></div>
<div style="left:0px;top:267.0px;width:26px;height:1px;background:#d6d6d6;"></div>
<div style="left:26px;top:266.75px;width:500px;height:1.25px;background:#111;"></div>
<div style="left:0px;top:285.0px;width:26px;height:1px;background:#d6d6d6;"></div>
<div style="left:26px;top:284.75px;width:500px;height:1.25px;background:#111;"></div>
<div style="left:0px;top:303.0px;width:26px;height:1px;background:#d6d6d6;"></div>
<div style="left:26px;top:302.75px;width:500px;height:1.25px;background:#111;"></div>
<div style="left:0px;top:321.0px;width:26px;height:1px;background:#d6d6d6;"></div>
<div style="left:26px;top:320.75px;width:500px;height:1.25px;background:#111;"></div>
<div style="left:0px;top:339.0px;width:26px;height:1px;background:#d6d6d6;"></div>
<div style="left:26px;top:338.75px;width:500px;height:1.25px;background:#111;"></div>
<div style="left:0px;top:357.0px;width:26px;height:1px;background:#d6d6d6;"></div>
<div style="left:26px;top:356.75px;width:500px;height:1.25px;background:#111;"></div>
<div style="left:0px;top:375.0px;width:26px;height:1px;background:#d6d6d6;"></div>
<div style="left:26px;top:374.75px;width:500px;height:1.25px;background:#111;"></div>
<div style="left:0px;top:393.0px;width:26px;height:1px;background:#d6d6d6;"></div>
<div style="left:26px;top:392.75px;width:500px;height:1.25px;background:#111;"></div>
<div style="left:127.88px;top:15.400000000000006px;width:1.25px;height:400px;background:#111;"></div>
<div style="left:224.17999999999995px;top:15.400000000000006px;width:1.25px;height:400px;background:#111;"></div>
<div style="left:422.88px;top:15.400000000000006px;width:1.25px;height:400px;background:#111;"></div>
<span class="t" style="left:34.30px;top:20.76px;font-size:16px;line-height:16px;color:#000;letter-spacing:0.370px;font-weight:bold;">First Name</span>
<span class="t" style="left:135.40px;top:20.76px;font-size:16px;line-height:16px;color:#000;letter-spacing:0.153px;font-weight:bold;">Last Name</span>
<span class="t" style="left:303.85px;top:20.76px;font-size:16px;line-height:16px;color:#000;letter-spacing:-0.278px;font-weight:bold;">Email</span>
<span class="t" style="left:447.65px;top:20.76px;font-size:16px;line-height:16px;color:#000;letter-spacing:-0.118px;font-weight:bold;">Phone</span>
<span class="t" style="left:9.58px;top:25.89px;font-size:12.3px;line-height:12.3px;color:#444;">1</span>
<span class="t" style="left:9.58px;top:49.89px;font-size:12.3px;line-height:12.3px;color:#444;">2</span>
<span class="t" style="left:56.70px;top:49.63px;font-size:12.6px;line-height:12.6px;color:#1a1a1a;">William</span>
<span class="t" style="left:148.48px;top:49.63px;font-size:12.6px;line-height:12.6px;color:#1a1a1a;">L.Beedles</span>
<span class="t" style="left:272.55px;top:49.72px;font-size:12.5px;line-height:12.5px;color:#1a1a1a;letter-spacing:0.031px;">wbeedles@ku.edu</span>
<span class="t" style="left:429.90px;top:49.72px;font-size:12.5px;line-height:12.5px;color:#1a1a1a;letter-spacing:-0.092px;">(785) 864-7530</span>
<span class="t" style="left:9.58px;top:73.89px;font-size:12.3px;line-height:12.3px;color:#444;">3</span>
<span class="t" style="left:62.65px;top:73.63px;font-size:12.6px;line-height:12.6px;color:#1a1a1a;">Erica</span>
<span class="t" style="left:154.44px;top:73.63px;font-size:12.6px;line-height:12.6px;color:#1a1a1a;">Casillas</span>
<span class="t" style="left:256.85px;top:73.72px;font-size:12.5px;line-height:12.5px;color:#1a1a1a;letter-spacing:0.059px;">ecasillas@bauer.uh.edu</span>
<span class="t" style="left:433.66px;top:73.72px;font-size:12.5px;line-height:12.5px;color:#1a1a1a;letter-spacing:-0.097px;">713-743-5936</span>
<span class="t" style="left:9.58px;top:91.89px;font-size:12.3px;line-height:12.3px;color:#444;">4</span>
<span class="t" style="left:62.29px;top:91.63px;font-size:12.6px;line-height:12.6px;color:#1a1a1a;">Dave</span>
<span class="t" style="left:141.13px;top:91.63px;font-size:12.6px;line-height:12.6px;color:#1a1a1a;">A.Leshmond</span>
<span class="t" style="left:260.50px;top:91.72px;font-size:12.5px;line-height:12.5px;color:#1a1a1a;letter-spacing:0.122px;">dlesmond@tulane.edu</span>
<span class="t" style="left:433.00px;top:91.72px;font-size:12.5px;line-height:12.5px;color:#1a1a1a;letter-spacing:0.127px;">504.865.5665</span>
<span class="t" style="left:9.58px;top:109.89px;font-size:12.3px;line-height:12.3px;color:#444;">5</span>
<span class="t" style="left:60.19px;top:109.63px;font-size:12.6px;line-height:12.6px;color:#1a1a1a;">Gloria</span>
<span class="t" style="left:153.74px;top:109.63px;font-size:12.6px;line-height:12.6px;color:#1a1a1a;">Barczak</span>
<span class="t" style="left:267.30px;top:109.72px;font-size:12.5px;line-height:12.5px;color:#1a1a1a;letter-spacing:0.114px;">g.barczak@neu.edu</span>
<span class="t" style="left:433.00px;top:109.72px;font-size:12.5px;line-height:12.5px;color:#1a1a1a;letter-spacing:0.127px;">617.373.5251</span>
<span class="t" style="left:9.58px;top:127.89px;font-size:12.3px;line-height:12.3px;color:#444;">6</span>
<span class="t" style="left:53.19px;top:127.63px;font-size:12.6px;line-height:12.6px;color:#1a1a1a;">Matthew</span>
<span class="t" style="left:148.13px;top:127.63px;font-size:12.6px;line-height:12.6px;color:#1a1a1a;">Semadeni</span>
<span class="t" style="left:269.25px;top:127.72px;font-size:12.5px;line-height:12.5px;color:#1a1a1a;letter-spacing:-0.079px;">semadeni@asu.edu</span>
<span class="t" style="left:433.66px;top:127.72px;font-size:12.5px;line-height:12.5px;color:#1a1a1a;letter-spacing:-0.097px;">480-965-8008</span>
<span class="t" style="left:9.58px;top:145.89px;font-size:12.3px;line-height:12.3px;color:#444;">7</span>
<span class="t" style="left:56.10px;top:145.63px;font-size:12.6px;line-height:12.6px;color:#1a1a1a;">Vincent</span>
<span class="t" style="left:163.89px;top:145.63px;font-size:12.6px;line-height:12.6px;color:#1a1a1a;">Pohl</span>
<span class="t" style="left:283.30px;top:145.72px;font-size:12.5px;line-height:12.5px;color:#1a1a1a;letter-spacing:0.041px;">pohl@uga.edu</span>
<span class="t" style="left:9.58px;top:163.89px;font-size:12.3px;line-height:12.3px;color:#444;">8</span>
<span class="t" style="left:57.04px;top:163.63px;font-size:12.6px;line-height:12.6px;color:#1a1a1a;">Ronald</span>
<span class="t" style="left:156.08px;top:163.63px;font-size:12.6px;line-height:12.6px;color:#1a1a1a;">Warren</span>
<span class="t" style="left:274.65px;top:163.72px;font-size:12.5px;line-height:12.5px;color:#1a1a1a;letter-spacing:0.230px;">warren@uga.edu</span>
<span class="t" style="left:433.66px;top:163.72px;font-size:12.5px;line-height:12.5px;color:#1a1a1a;letter-spacing:-0.097px;">706-542-3693</span>
<span class="t" style="left:9.58px;top:181.89px;font-size:12.3px;line-height:12.3px;color:#217346;font-weight:bold;">9</span>
<span class="t" style="left:59.13px;top:181.63px;font-size:12.6px;line-height:12.6px;color:#1a1a1a;">Veena</span>
<span class="t" style="left:147.09px;top:181.63px;font-size:12.6px;line-height:12.6px;color:#1a1a1a;">Srinivasan</span>
<span class="t" style="left:247.90px;top:181.72px;font-size:12.5px;line-height:12.5px;color:#1a1a1a;letter-spacing:-0.069px;">Veena.Srinivasan@asu.edu</span>
<span class="t" style="left:6.16px;top:199.89px;font-size:12.3px;line-height:12.3px;color:#444;">10</span>
<span class="t" style="left:58.09px;top:199.63px;font-size:12.6px;line-height:12.6px;color:#1a1a1a;">Robert</span>
<span class="t" style="left:163.66px;top:199.63px;font-size:12.6px;line-height:12.6px;color:#1a1a1a;">Yahr</span>
<span class="t" style="left:243.40px;top:199.72px;font-size:12.5px;line-height:12.5px;color:#1a1a1a;letter-spacing:0.322px;">robert.yahr@marquette.edu</span>
<span class="t" style="left:429.90px;top:199.72px;font-size:12.5px;line-height:12.5px;color:#1a1a1a;letter-spacing:-0.092px;">(414) 288-1459</span>
<span class="t" style="left:6.62px;top:217.89px;font-size:12.3px;line-height:12.3px;color:#444;">11</span>
<span class="t" style="left:63.35px;top:217.63px;font-size:12.6px;line-height:12.6px;color:#1a1a1a;">Gary</span>
<span class="t" style="left:156.89px;top:217.63px;font-size:12.6px;line-height:12.6px;color:#1a1a1a;">Pieroni</span>
<span class="t" style="left:247.10px;top:217.72px;font-size:12.5px;line-height:12.5px;color:#1a1a1a;letter-spacing:0.118px;">pieroni@haas.berkeley.edu</span>
<span class="t" style="left:429.90px;top:217.72px;font-size:12.5px;line-height:12.5px;color:#1a1a1a;letter-spacing:-0.092px;">(510) 642-4716</span>
<span class="t" style="left:6.16px;top:235.89px;font-size:12.3px;line-height:12.3px;color:#444;">12</span>
<span class="t" style="left:55.29px;top:235.63px;font-size:12.6px;line-height:12.6px;color:#1a1a1a;">Farrokh</span>
<span class="t" style="left:152.69px;top:235.63px;font-size:12.6px;line-height:12.6px;color:#1a1a1a;">Nourzad</span>
<span class="t" style="left:230.10px;top:235.72px;font-size:12.5px;line-height:12.5px;color:#1a1a1a;letter-spacing:0.260px;">farrokh.nourzad@marquette.edu</span>
<span class="t" style="left:429.90px;top:235.72px;font-size:12.5px;line-height:12.5px;color:#1a1a1a;letter-spacing:-0.092px;">(414) 288-3570</span>
<span class="t" style="left:6.16px;top:253.89px;font-size:12.3px;line-height:12.3px;color:#444;">13</span>
<span class="t" style="left:66.26px;top:253.63px;font-size:12.6px;line-height:12.6px;color:#1a1a1a;">Yair</span>
<span class="t" style="left:154.09px;top:253.63px;font-size:12.6px;line-height:12.6px;color:#1a1a1a;">Tauman</span>
<span class="t" style="left:239.00px;top:253.72px;font-size:12.5px;line-height:12.5px;color:#1a1a1a;letter-spacing:0.149px;">Yair.Tauman@stonybrook.edu</span>
<span class="t" style="left:433.66px;top:253.72px;font-size:12.5px;line-height:12.5px;color:#1a1a1a;letter-spacing:-0.097px;">631-632-7557</span>
<span class="t" style="left:6.16px;top:271.89px;font-size:12.3px;line-height:12.3px;color:#444;">14</span>
<span class="t" style="left:65.80px;top:271.63px;font-size:12.6px;line-height:12.6px;color:#1a1a1a;">Ray</span>
<span class="t" style="left:160.04px;top:271.63px;font-size:12.6px;line-height:12.6px;color:#1a1a1a;">Burke</span>
<span class="t" style="left:260.75px;top:271.72px;font-size:12.5px;line-height:12.5px;color:#1a1a1a;letter-spacing:0.057px;">rayburke@indiana.edu</span>
<span class="t" style="left:429.90px;top:271.72px;font-size:12.5px;line-height:12.5px;color:#1a1a1a;letter-spacing:-0.092px;">(812) 855-1066</span>
<span class="t" style="left:6.16px;top:289.89px;font-size:12.3px;line-height:12.3px;color:#444;">15</span>
<span class="t" style="left:57.04px;top:289.63px;font-size:12.6px;line-height:12.6px;color:#1a1a1a;">Ronald</span>
<span class="t" style="left:156.90px;top:289.63px;font-size:12.6px;line-height:12.6px;color:#1a1a1a;">Frazier</span>
<span class="t" style="left:250.30px;top:289.72px;font-size:12.5px;line-height:12.5px;color:#1a1a1a;letter-spacing:-0.007px;">rlfrazier@business.fsu.edu</span>
<span class="t" style="left:433.66px;top:289.72px;font-size:12.5px;line-height:12.5px;color:#1a1a1a;letter-spacing:-0.097px;">850-644-8220</span>
<span class="t" style="left:6.16px;top:307.89px;font-size:12.3px;line-height:12.3px;color:#444;">16</span>
<span class="t" style="left:44.44px;top:307.63px;font-size:12.6px;line-height:12.6px;color:#1a1a1a;">Christopher</span>
<span class="t" style="left:162.15px;top:307.63px;font-size:12.6px;line-height:12.6px;color:#1a1a1a;">Ross</span>
<span class="t" style="left:266.40px;top:307.72px;font-size:12.5px;line-height:12.5px;color:#1a1a1a;letter-spacing:0.014px;">cross@bauer.uh.edu</span>
<span class="t" style="left:433.66px;top:307.72px;font-size:12.5px;line-height:12.5px;color:#1a1a1a;letter-spacing:-0.097px;">713-743-8506</span>
<span class="t" style="left:6.16px;top:325.89px;font-size:12.3px;line-height:12.3px;color:#444;">17</span>
<span class="t" style="left:55.64px;top:325.63px;font-size:12.6px;line-height:12.6px;color:#1a1a1a;">Andrew</span>
<span class="t" style="left:158.06px;top:325.63px;font-size:12.6px;line-height:12.6px;color:#1a1a1a;">Reffett</span>
<span class="t" style="left:261.65px;top:325.72px;font-size:12.5px;line-height:12.5px;color:#1a1a1a;letter-spacing:0.307px;">reffeta@miamioh.edu</span>
<span class="t" style="left:433.00px;top:325.72px;font-size:12.5px;line-height:12.5px;color:#1a1a1a;letter-spacing:0.127px;">513.529.6212</span>
<span class="t" style="left:6.16px;top:343.89px;font-size:12.3px;line-height:12.3px;color:#444;">18</span>
<span class="t" style="left:55.29px;top:343.63px;font-size:12.6px;line-height:12.6px;color:#1a1a1a;">Michael</span>
<span class="t" style="left:161.10px;top:343.63px;font-size:12.6px;line-height:12.6px;color:#1a1a1a;">Wiles</span>
<span class="t" style="left:256.70px;top:343.72px;font-size:12.5px;line-height:12.5px;color:#1a1a1a;letter-spacing:0.044px;">Michael.Wiles@asu.edu</span>
<span class="t" style="left:433.66px;top:343.72px;font-size:12.5px;line-height:12.5px;color:#1a1a1a;letter-spacing:-0.097px;">480-965-2322</span>
<span class="t" style="left:6.16px;top:361.89px;font-size:12.3px;line-height:12.3px;color:#444;">19</span>
<span class="t" style="left:44.44px;top:361.63px;font-size:12.6px;line-height:12.6px;color:#1a1a1a;">Christopher</span>
<span class="t" style="left:161.80px;top:361.63px;font-size:12.6px;line-height:12.6px;color:#1a1a1a;">Clark</span>
<span class="t" style="left:242.50px;top:361.72px;font-size:12.5px;line-height:12.5px;color:#1a1a1a;letter-spacing:-0.021px;">Christopher.Clark.1@asu.edu</span>
<span class="t" style="left:433.66px;top:361.72px;font-size:12.5px;line-height:12.5px;color:#1a1a1a;letter-spacing:-0.097px;">480-965-5947</span>
<span class="t" style="left:6.16px;top:379.89px;font-size:12.3px;line-height:12.3px;color:#444;">20</span>
<span class="t" style="left:58.44px;top:379.63px;font-size:12.6px;line-height:12.6px;color:#1a1a1a;">James</span>
<span class="t" style="left:163.20px;top:379.63px;font-size:12.6px;line-height:12.6px;color:#1a1a1a;">Brett</span>
<span class="t" style="left:261.65px;top:379.72px;font-size:12.5px;line-height:12.5px;color:#1a1a1a;letter-spacing:0.076px;">James.Brett@asu.edu</span>
<span class="t" style="left:433.66px;top:379.72px;font-size:12.5px;line-height:12.5px;color:#1a1a1a;letter-spacing:-0.097px;">480-965-3621</span>
<div style="left:126.5px;top:176.2px;width:100px;height:20.6px;border:2px solid #217346;"></div>
<div style="left:222.5px;top:193.2px;width:6px;height:6px;background:#217346;border:1px solid #fff;"></div>
</div>
<div style="left:374px;top:573px;width:514px;height:28px;background:#f1f1f1;border-top:1px solid #c6c6c6;"></div>
<div style="left:474.5px;top:573px;width:87.5px;height:24.8px;background:#fff;border-left:1px solid #c6c6c6;border-right:1px solid #c6c6c6;border-bottom:2.400px solid #217346;"></div>
<span class="t" style="left:486.30px;top:580.50px;font-size:13px;line-height:13px;color:#217346;letter-spacing:-0.362px;font-weight:bold;">Professors</span>
<svg style="left:400px;top:581px" width="40" height="10" viewBox="0 0 40 10"><path d="M5.800 1.500v7L1.800 5z" fill="#c3c3c3"/><path d="M30.200 1.500v7L34.200 5z" fill="#c3c3c3"/></svg>
<svg style="left:594px;top:577.500px" width="18" height="18" viewBox="0 0 18 18" fill="none" stroke="#6e6e6e"><circle cx="9" cy="9" r="7.300" stroke-width="1.100"/><path d="M5 9h8M9 5v8" stroke-width="1.300"/></svg>
<div style="left:791px;top:582px;width:1.6px;height:1.6px;background:#a5a5a5;"></div>
<div style="left:791px;top:586px;width:1.6px;height:1.6px;background:#a5a5a5;"></div>
<div style="left:791px;top:590px;width:1.6px;height:1.6px;background:#a5a5a5;"></div>
<div style="left:877px;top:580px;width:11px;height:15px;background:#e6e6e6;"></div>
<div style="left:808px;top:580px;width:69px;height:15px;background:#fff;border:1px solid #ababab;"></div>
<div style="left:822px;top:580px;width:1px;height:15px;background:#ababab;"></div>
<svg style="left:811px;top:583px" width="9" height="9" viewBox="0 0 9 9"><path d="M6.500 1v7L2 4.500z" fill="#777"/></svg>
<div style="left:374px;top:601px;width:514px;height:20px;background:#217346;"></div>
<span class="t" style="left:381.60px;top:606.38px;font-size:11.6px;line-height:11.6px;color:#fff;transform:scaleX(0.8257);transform-origin:0 0;">READY</span>
<div style="left:773px;top:601px;width:37px;height:20px;background:#165c35;"></div>
<svg style="left:785px;top:604px" width="14" height="14" viewBox="0 0 14 14" fill="none" stroke="#c8f0d4" stroke-width="1.100"><rect x="0.800" y="0.800" width="12" height="12"/><path d="M0.800 4.800h12M0.800 8.800h12M4.800 0.800v12M8.800 0.800v12"/></svg>
<svg style="left:822.500px;top:604.500px" width="15" height="14" viewBox="0 0 15 14" fill="none" stroke="#c8f0d4" stroke-width="1.100"><rect x="0.800" y="0.800" width="13" height="12"/><rect x="3.600" y="3.400" width="7.400" height="7"/><path d="M5.200 5.600h4.200M5.200 7.800h4.200"/></svg>
<svg style="left:860.500px;top:604.500px" width="15" height="14" viewBox="0 0 15 14" fill="none" stroke="#c8f0d4" stroke-width="1.100"><rect x="0.800" y="0.800" width="13" height="12"/><path d="M3.800 0.800h2.400v7h-2.400zM7.500 0.800h2.400v7h-2.400z" fill="#c8f0d4" stroke="none"/><path d="M1 8h13" /></svg>
<div style="left:888px;top:80px;width:7px;height:545px;background:#fff;"></div>
<div style="left:892.3px;top:0px;width:2.7px;height:708px;background:#ebebeb;"></div>
<div style="left:892.3px;top:0px;width:2.7px;height:7px;background:#e0e6e2;"></div>
<div style="left:892.3px;top:7px;width:2.7px;height:26px;background:#cfcfcf;"></div>
<div style="left:892.3px;top:65px;width:2.7px;height:13px;background:#dedede;"></div>
<div style="left:892.3px;top:528px;width:2.7px;height:27px;background:#e3e3e3;"></div>
<svg id="arrow" style="left:0;top:0" width="895" height="708" viewBox="0 0 895 708" fill="none" stroke-linecap="round" stroke-linejoin="round">
<path d="M188.6 379.3C189.4 376.2 191.4 367.4 193.6 361.0C195.8 354.6 198.7 347.5 201.5 340.7C204.3 333.9 207.5 326.8 210.5 320.4C213.5 314.0 216.5 308.3 219.5 302.3C222.5 296.3 225.6 290.0 228.6 284.2C231.6 278.4 234.4 273.1 237.6 267.3C240.8 261.5 244.1 255.1 247.5 249.5C250.9 243.9 254.1 239.0 257.9 233.7C261.7 228.4 265.9 223.0 270.4 217.6C274.9 212.2 279.9 206.6 284.7 201.5C289.5 196.4 293.9 191.7 299.0 187.2C304.1 182.7 309.4 178.9 315.1 174.7C320.8 170.5 327.1 165.8 333.0 162.2C338.9 158.5 344.9 155.3 350.8 152.8C356.8 150.3 363.3 148.5 368.7 147.2C374.1 145.8 380.6 145.1 383.0 144.7" stroke="#e0141c" stroke-width="3.200"/>
<path d="M368.7 147.2C371.1 146.8 377.8 145.5 383.0 144.7C388.2 143.8 395.1 142.8 400.2 142.1C405.3 141.4 410.1 141.1 413.6 140.7C417.1 140.3 416.5 140.0 421.0 139.8C425.5 139.6 434.0 139.7 440.5 139.7C447.0 139.7 455.5 139.5 460.0 139.8C464.5 140.1 464.0 140.8 467.3 141.3C470.6 141.8 475.0 142.4 480.0 143.0C485.0 143.6 491.4 144.2 497.3 145.0C503.2 145.8 509.8 146.9 515.1 147.9C520.4 148.9 525.1 149.9 528.9 151.1C532.7 152.2 534.3 153.2 537.8 154.8C541.3 156.4 547.7 159.8 549.7 160.8" stroke="#d3121a" stroke-width="2.500"/>
<path d="M537.8 154.8C539.8 155.8 545.8 158.7 549.7 160.8C553.7 162.9 557.8 165.3 561.5 167.4C565.2 169.5 568.4 171.4 571.9 173.4C575.4 175.4 579.1 177.3 582.3 179.3C585.5 181.3 588.2 183.0 591.2 185.2C594.2 187.4 597.4 190.3 600.1 192.7C602.8 195.0 605.5 197.2 607.5 199.3C609.5 201.4 611.2 204.1 612.0 205.0" stroke="#e0141c" stroke-width="3.200"/>
<path d="M595.800 218.200L605.300 205.300L612 196.400L616.400 189L621.800 190.200L623.200 200L623.200 236.200L619.400 235.200L608 228z" fill="#f7111a" stroke="#f7111a" stroke-width="1.200"/>
</svg>
</div></body></html>
